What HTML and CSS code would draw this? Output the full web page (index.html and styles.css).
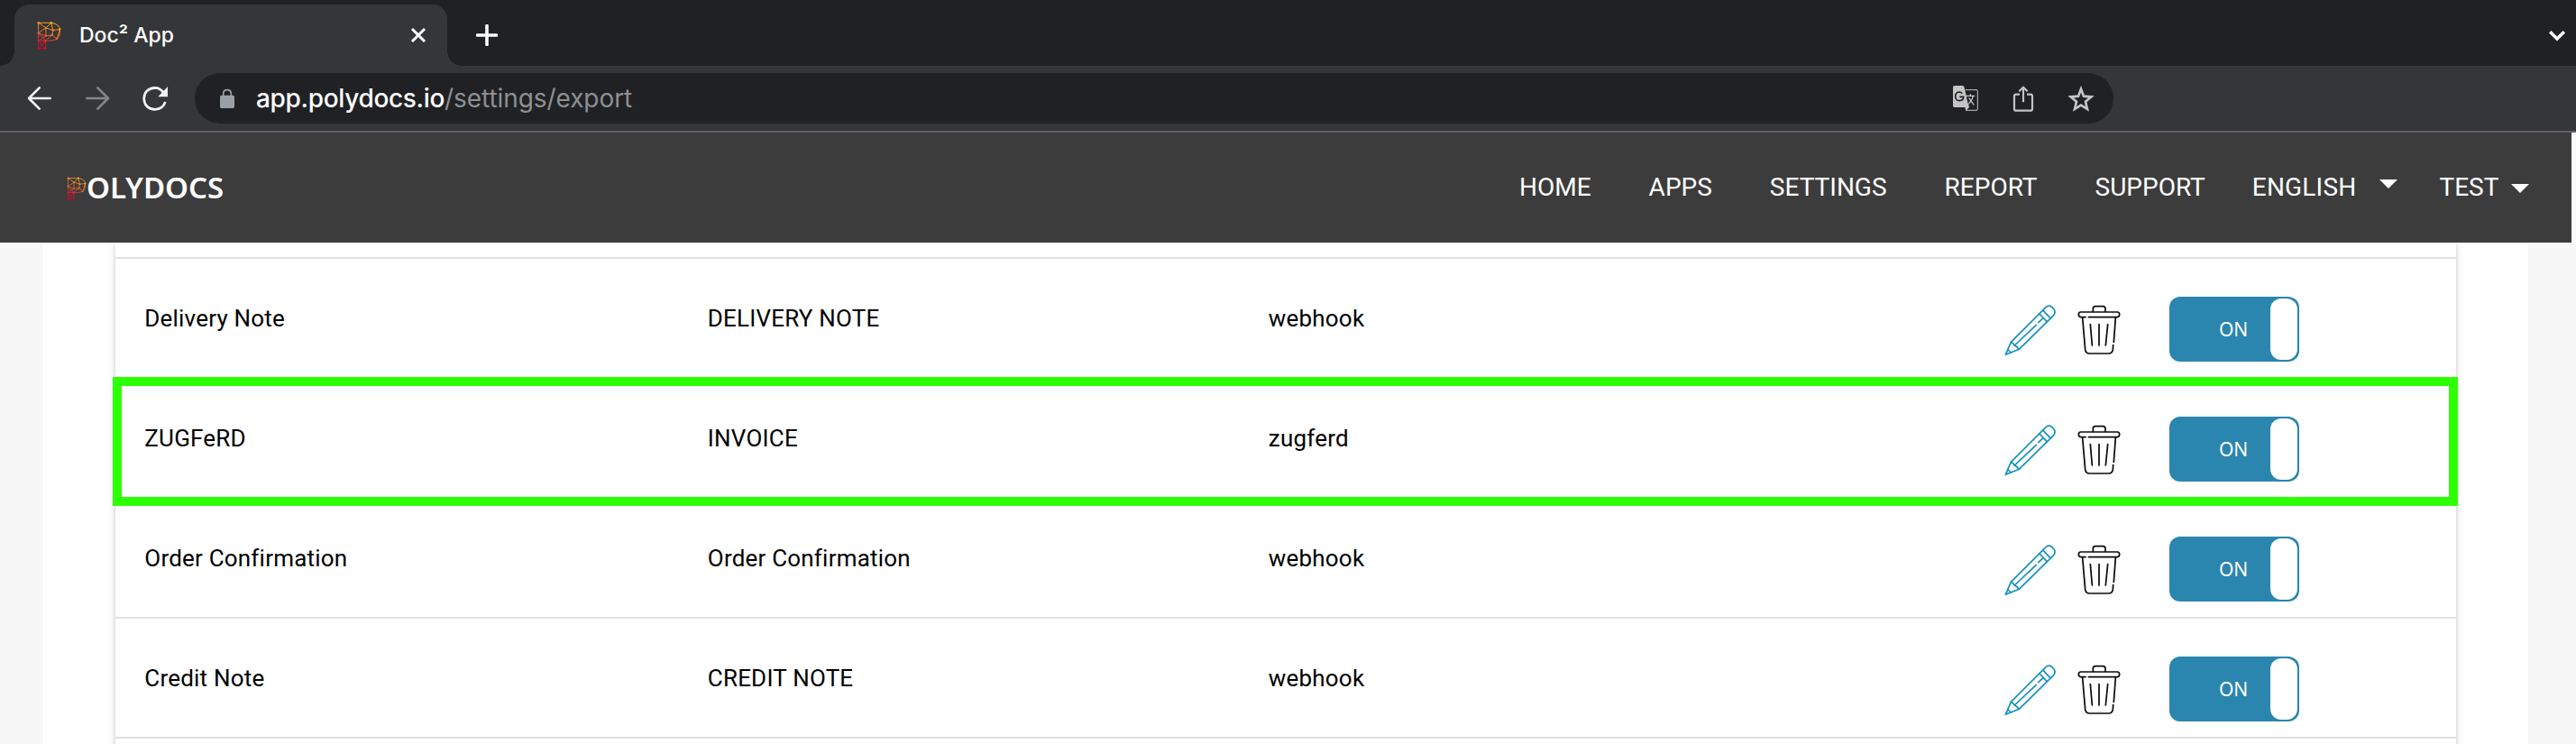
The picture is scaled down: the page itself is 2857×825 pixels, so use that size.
FILE: index.html
```html
<!DOCTYPE html>
<html lang="en">
<head>
<meta charset="utf-8">
<title>Doc² App</title>
<link rel="stylesheet" href="styles.css">
</head>
<body>
<svg class="defs" width="0" height="0" aria-hidden="true">
  <defs>
    <linearGradient id="ember" gradientUnits="userSpaceOnUse" x1="115" y1="40" x2="80" y2="132">
      <stop offset="0" stop-color="#fbb01f"/>
      <stop offset="0.5" stop-color="#e8632a"/>
      <stop offset="0.8" stop-color="#d8122a"/>
      <stop offset="1" stop-color="#d00a28"/>
    </linearGradient>
    <symbol id="mesh" viewBox="62 38 82 98">
      <g fill="none" stroke="url(#ember)" stroke-width="3">
        <path d="M67 44H110Q138 48 139 67Q140 90 129 98Q118 105 91 104V130H67V44L92 61L110 44L116 69L139 66L129 98L113 85L92 88V61L116 69L113 85L91 104L67 78L92 61M67 78L92 88L67 104H91M67 104L91 130M91 104L67 130"/>
      </g>
      <g fill="url(#ember)">
        <circle cx="67" cy="44" r="3.800"/><circle cx="110" cy="44" r="3.800"/><circle cx="139" cy="66" r="3.800"/>
        <circle cx="116" cy="69" r="3.800"/><circle cx="92" cy="61" r="3.800"/><circle cx="67" cy="78" r="3.800"/>
        <circle cx="92" cy="88" r="3.800"/><circle cx="113" cy="85" r="3.800"/><circle cx="129" cy="98" r="3.800"/>
        <circle cx="67" cy="104" r="3.800"/><circle cx="91" cy="104" r="3.800"/><circle cx="67" cy="130" r="3.800"/>
        <circle cx="91" cy="130" r="3.800"/>
      </g>
    </symbol>
    <symbol id="pencil" viewBox="100 80 174 174">
      <g fill="none" stroke="#1490ba" stroke-width="5" stroke-linejoin="round" stroke-linecap="round">
        <path d="M104 249L122 207L236 93Q246 81 258 90L265 98Q272 107 264 118L149 231Z"/>
        <path d="M122 207Q130 211 134 218Q143 222 149 231M113 233L122 242M134 218L206 150M213 142L227 129M217 113L241 138M229 102L252 126"/>
      </g>
    </symbol>
    <symbol id="trash" viewBox="342 84 146 168">
      <g fill="none" stroke="#0c0c0c" stroke-width="5.200" stroke-linecap="round" stroke-linejoin="round">
        <path d="M394 106V97Q394 89 402 89H427Q435 89 435 97V106"/>
        <path d="M369 125H353Q346 123 346 116Q346 108 353 108H475Q482 108 482 116Q482 123 475 125H379"/>
        <path d="M359 127L368 233Q370 246 382 246H446Q458 246 460 233L461 218M469 127L463 208"/>
        <path d="M385 149L391 219M414 149V219M443 149L436 219"/>
      </g>
    </symbol>
  </defs>
</svg>

<div class="tabstrip">
  <div class="tab">
    <svg class="favicon"><use href="#mesh"/></svg>
    <span class="tab-title">Doc² App</span>
    <svg class="tab-close" viewBox="0 0 18 18"><path d="M2 2L16 16M16 2L2 16"/></svg>
  </div>
  <svg class="new-tab" viewBox="0 0 24 24"><path d="M12 1.500V22.500M1.500 12H22.500"/></svg>
  <svg class="tab-search" viewBox="0 0 20 13"><path d="M2.200 2.200L10 10L17.800 2.200"/></svg>
</div>

<div class="toolbar">
  <svg class="nav-icon" viewBox="30 44 84 84"><path d="M107 86H38M71 51L36 86L71 121"/></svg>
  <svg class="nav-icon dim" viewBox="222 44 84 84"><path d="M229 86H298M265 51L300 86L265 121"/></svg>
  <svg class="reload" viewBox="414 44 87 87">
    <path d="M484 67Q472 51 456 51Q421 53 419 87Q421 121 456 123Q482 122 490 98" fill="none" stroke="#f1f3f4" stroke-width="8"/>
    <path d="M498 47V81H466Z" fill="#f1f3f4"/>
  </svg>
  <div class="omnibox">
    <svg class="lock" viewBox="669 54 54 69">
      <rect x="672" y="77" width="48" height="43" rx="5" fill="#9aa0a6"/>
      <path d="M683 79V70Q684 59 696 59Q708 59 709 70V79" fill="none" stroke="#9aa0a6" stroke-width="5"/>
    </svg>
    <span class="url"><span class="host">app.polydocs.io</span><span class="path">/settings/export</span></span>
    <svg class="translate" viewBox="45 42 90 90">
      <path d="M89 59H126Q130 59 130 63V123Q130 127 126 127H91" fill="none" stroke="#c4c4c4" stroke-width="3"/>
      <path d="M53 45H80Q84 45 85 49L102 117L91 128L88 117H53Q48 117 48 112V50Q48 45 53 45Z" fill="#c4c4c4"/>
      <path d="M79 71Q75 66 69 66Q56 67 56 81Q57 95 69 95Q83 95 83 82H70" fill="none" stroke="#202124" stroke-width="5"/>
      <path d="M93 79H121M106 73V79M115 79Q112 95 97 107M101 86L118 109" fill="none" stroke="#c4c4c4" stroke-width="4"/>
      <path d="M94 84L99 105" stroke="#202124" stroke-width="2"/>
    </svg>
    <svg class="share" viewBox="246 42 72 93">
      <path d="M270 74H258Q252 74 252 80V122Q252 128 258 128H306Q312 128 312 122V80Q312 74 306 74H294M282 100V51M268 64L282 50L296 64" fill="none" stroke="#c4c4c4" stroke-width="6.500"/>
    </svg>
    <svg class="star" viewBox="426 40 96 93">
      <path d="M474 54L483 78L508 80L489 96L495 121L474 108L453 121L459 96L440 80L465 78Z" fill="none" stroke="#c4c4c4" stroke-width="8"/>
    </svg>
  </div>
</div>

<header class="site-header">
  <div class="brand">
    <svg class="brand-mark"><use href="#mesh"/></svg>
    <span class="brand-name">OLYDOCS</span>
  </div>
  <nav class="menu">
    <a>HOME</a>
    <a>APPS</a>
    <a>SETTINGS</a>
    <a>REPORT</a>
    <a>SUPPORT</a>
    <a class="language">ENGLISH <svg class="caret" viewBox="0 0 20 10"><path d="M0 0H20L10 10Z"/></svg></a>
    <a class="account">TEST <svg class="caret" viewBox="0 0 20 10"><path d="M0 0H20L10 10Z"/></svg></a>
  </nav>
</header>

<main class="page">
  <section class="sheet">
    <div class="table">
      <div class="row-end"></div>
      <div class="row">
        <span>Delivery Note</span><span>DELIVERY NOTE</span><span>webhook</span>
        <div class="actions"><svg class="pencil"><use href="#pencil"/></svg><svg class="trash"><use href="#trash"/></svg><div class="toggle"><span>ON</span><i></i></div></div>
      </div>
      <div class="row selected">
        <span>ZUGFeRD</span><span>INVOICE</span><span>zugferd</span>
        <div class="actions"><svg class="pencil"><use href="#pencil"/></svg><svg class="trash"><use href="#trash"/></svg><div class="toggle"><span>ON</span><i></i></div></div>
      </div>
      <div class="row">
        <span>Order Confirmation</span><span>Order Confirmation</span><span>webhook</span>
        <div class="actions"><svg class="pencil"><use href="#pencil"/></svg><svg class="trash"><use href="#trash"/></svg><div class="toggle"><span>ON</span><i></i></div></div>
      </div>
      <div class="row">
        <span>Credit Note</span><span>CREDIT NOTE</span><span>webhook</span>
        <div class="actions"><svg class="pencil"><use href="#pencil"/></svg><svg class="trash"><use href="#trash"/></svg><div class="toggle"><span>ON</span><i></i></div></div>
      </div>
      <div class="row"></div>
    </div>
  </section>
</main>
</body>
</html>
```
FILE: styles.css
```css
*, *::before, *::after { box-sizing: border-box; }

body {
  margin: 0;
  height: 825px;
  overflow: hidden;
  display: flex;
  flex-direction: column;
  background: #f7f7f7;
  font-family: Roboto, "Liberation Sans", sans-serif;
}

svg { display: block; flex: none; }
.defs { position: absolute; }

/* Browser tab strip */
.tabstrip {
  flex: none;
  height: 73px;
  padding: 5px 11px 0 16px;
  display: flex;
  background: #202124;
}

.tab {
  position: relative;
  width: 480px;
  height: 68px;
  padding: 0 23px 0 25px;
  display: flex;
  align-items: flex-start;
  border-radius: 16px 16px 0 0;
  background: #35363a;
}

.tab::before,
.tab::after {
  content: "";
  position: absolute;
  bottom: 0;
  width: 16px;
  height: 16px;
}
.tab::before { left: -16px; background: radial-gradient(circle at 0 0, transparent 15.5px, #35363a 16px); }
.tab::after { right: -16px; background: radial-gradient(circle at 100% 0, transparent 15.5px, #35363a 16px); }

.favicon { width: 27px; height: 33px; margin-top: 17.5px; }

.tab-title {
  margin: 20px auto 0 20px;
  font: 500 23px/28px Inter, sans-serif;
  color: #fff;
}

.tab-close { width: 18px; height: 18px; margin-top: 25px; fill: none; stroke: #fff; stroke-width: 3; }
.new-tab { width: 24px; height: 24px; margin: 22px 0 0 32px; fill: none; stroke: #fff; stroke-width: 3.6; stroke-linecap: round; }
.tab-search { width: 20px; height: 13px; margin: 28px 0 0 auto; fill: none; stroke: #fff; stroke-width: 3.4; }

/* Address bar row */
.toolbar {
  flex: none;
  height: 74px;
  padding: 0 513px 0 30px;
  display: flex;
  align-items: center;
  background: #35363a;
  border-bottom: 2px solid #5f6065;
}

.nav-icon { width: 28px; height: 28px; margin-right: 36px; fill: none; stroke: #f1f3f4; stroke-width: 8; stroke-linecap: round; stroke-linejoin: round; }
.nav-icon.dim { stroke: #85868a; }
.reload { width: 29px; height: 29px; margin-right: 29px; }

.omnibox {
  flex: 1;
  height: 56px;
  padding: 0 20px 0 27px;
  display: flex;
  align-items: center;
  border-radius: 28px;
  background: #202124;
}

.lock { width: 18px; height: 23px; margin-right: 23px; }
.url { margin-right: auto; font: 28px/34px Inter, sans-serif; }
.host { font-weight: 500; letter-spacing: -0.33px; color: #fff; }
.path { letter-spacing: -0.07px; color: #8e8f92; }
.translate { width: 30px; height: 30px; margin-right: 37px; }
.share { width: 24px; height: 31px; margin-right: 36px; }
.star { width: 32px; height: 31px; }

/* Application header */
.site-header {
  flex: none;
  width: 2852px;
  height: 122px;
  padding-left: 74px;
  display: flex;
  align-items: flex-start;
  background: #3c3c3c;
  box-shadow: 5px 0 0 #fafafa;
}

.brand { width: 1611px; display: flex; }
.brand-mark { width: 22px; height: 26px; margin-top: 48.5px; }
.brand-name {
  margin-top: 38px;
  font: 600 33px/45px "Noto Sans", sans-serif;
  color: #fff;
}

.menu { display: flex; gap: 64px; padding-top: 44px; font-size: 28px; line-height: 33px; color: #fff; }
.menu a { display: flex; }
.menu .language { margin-left: -12px; letter-spacing: 0.2px; }
.menu .account { margin-left: -18px; }
.caret { width: 20px; height: 10px; fill: #fff; }
.language .caret { margin: 8px 0 0 26px; }
.account .caret { margin: 13px 0 0 14px; }

/* Page body */
.page { flex: 1; min-height: 0; padding: 0 53px 0 48px; overflow: hidden; }
.sheet { height: 100%; padding: 0 80px; overflow: hidden; background: #fff; }

.table {
  height: 700px;
  background: #fff;
  box-shadow: 0 -4px 2px -4px rgba(0, 0, 0, 0.2), 0 0 4px rgba(0, 0, 0, 0.14), 0 2px 10px rgba(0, 0, 0, 0.12);
}

.row-end { height: 16px; }

.row {
  position: relative;
  height: 133px;
  padding-left: 32.3px;
  display: grid;
  grid-template-columns: 624.5px 622px 816.7px 1fr;
  border-top: 2px solid #e0e0e0;
  font-size: 26px;
  line-height: 32px;
  letter-spacing: 0.2px;
  color: #000;
}
.row > span { padding-top: 50px; }

.selected::after {
  content: "";
  position: absolute;
  z-index: 1;
  top: -2px;
  left: -3px;
  right: -2px;
  height: 143px;
  border: 10px solid #2dff05;
}

.actions { display: flex; align-items: flex-start; }
.pencil { width: 58px; height: 58px; margin-top: 49.7px; }
.trash { width: 48.7px; height: 56px; margin: 51px 0 0 22.5px; }

.toggle {
  position: relative;
  width: 144px;
  height: 72px;
  margin: 42px 0 0 53.3px;
  padding: 2px;
  display: flex;
  justify-content: space-between;
  border-radius: 12px;
  background: #2a86ae;
}
.toggle span {
  padding: 20px 0 0 53px;
  font: 21px/28px "Noto Sans", sans-serif;
  letter-spacing: 0;
  color: #fff;
}
.toggle i { width: 30px; height: 68px; border-radius: 12px; background: #fff; }
```
